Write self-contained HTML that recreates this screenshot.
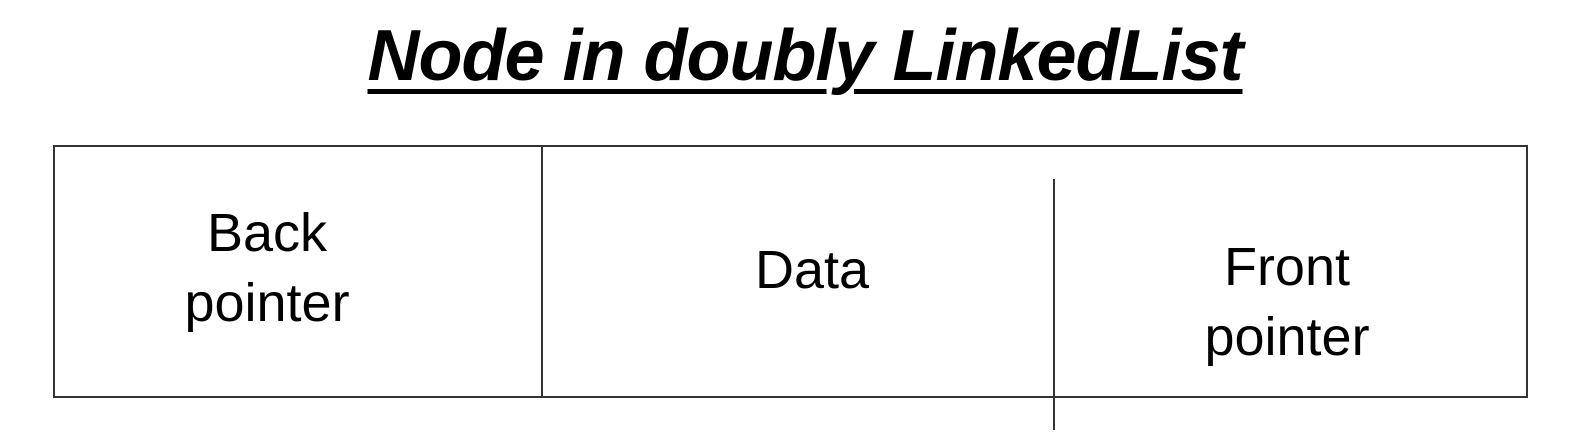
<!DOCTYPE html>
<html><head><style>
body{margin:0;width:1583px;height:446px;background:#fff;position:relative;overflow:hidden;font-family:"Liberation Sans",sans-serif;color:#000}
.t{position:absolute;left:0;width:1610px;text-align:center;top:15px;font-size:72px;font-weight:bold;font-style:italic;text-decoration:underline;text-decoration-thickness:5px;text-underline-offset:9px;letter-spacing:-1px}
.l{position:absolute;background:#333}
.x{position:absolute;font-size:54px;text-align:center;line-height:70px}
</style></head><body>
<div class="t">Node in doubly LinkedList</div>
<div class="l" style="left:53px;top:145px;width:1475px;height:2px"></div>
<div class="l" style="left:53px;top:396px;width:1475px;height:2px"></div>
<div class="l" style="left:53px;top:145px;width:2px;height:253px"></div>
<div class="l" style="left:1526px;top:145px;width:2px;height:253px"></div>
<div class="l" style="left:541px;top:145px;width:2px;height:253px"></div>
<div class="l" style="left:1053px;top:179px;width:2px;height:251px"></div>
<div class="x" style="left:117px;width:300px;top:198px">Back<br>pointer</div>
<div class="x" style="left:662px;width:300px;top:235px">Data</div>
<div class="x" style="left:1137px;width:300px;top:232px">Front<br>pointer</div>
</body></html>
